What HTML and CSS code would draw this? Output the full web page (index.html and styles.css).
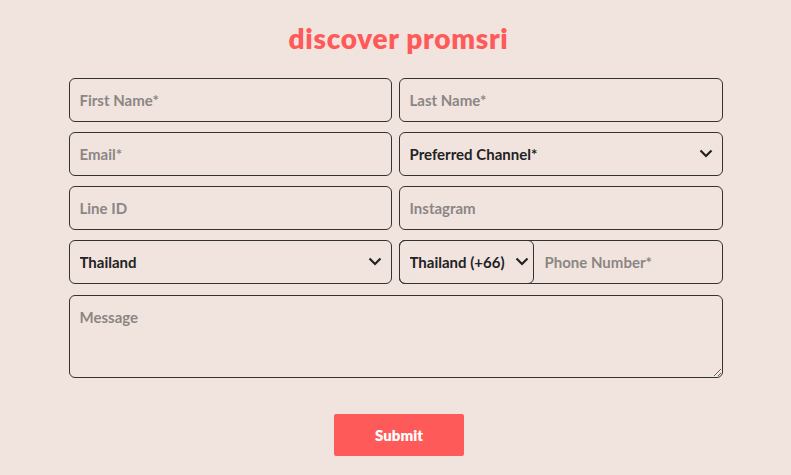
FILE: index.html
```html
<!DOCTYPE html>
<html lang="en">

<head>
    <meta charset="UTF-8">
    <title>discover promsri</title>
    <link rel="stylesheet" href="styles.css">
</head>

<body>
    <div class="container">
        <h2>discover promsri</h2>

        <form class="form">
            <div class="row">
                <input type="text" placeholder="First Name*">
                <input type="text" placeholder="Last Name*">
            </div>
            <div class="row">
                <input type="email" placeholder="Email*">
                <div class="select-wrap">
                    <select>
                        <option>Preferred Channel*</option>
                    </select>
                    <svg class="chevron" viewBox="0 0 14 9"><path d="M1.5 1.5 L7 7 L12.5 1.5" /></svg>
                </div>
            </div>
            <div class="row">
                <input type="text" placeholder="Line ID">
                <input type="text" placeholder="Instagram">
            </div>
            <div class="row">
                <div class="select-wrap">
                    <select>
                        <option>Thailand</option>
                    </select>
                    <svg class="chevron" viewBox="0 0 14 9"><path d="M1.5 1.5 L7 7 L12.5 1.5" /></svg>
                </div>
                <div class="phone">
                    <div class="select-wrap code">
                        <select>
                            <option>Thailand (+66)</option>
                        </select>
                        <svg class="chevron" viewBox="0 0 14 9"><path d="M1.5 1.5 L7 7 L12.5 1.5" /></svg>
                    </div>
                    <input type="tel" class="tel" placeholder="Phone Number*">
                </div>
            </div>
            <textarea placeholder="Message"></textarea>

            <button type="button">Submit</button>
        </form>
    </div>
</body>

</html>
```

FILE: styles.css
```css
body {
    margin: 0;
    font-family: 'Lato', sans-serif;
    background: #f1e4df;
    min-height: 100vh;
}

.container {
    width: 654px;
    margin: 0 auto;
    padding-top: 21px;
}

h2 {
    text-align: center;
    color: #ff5a5a;
    font-size: 28px;
    font-weight: 800;
    letter-spacing: 0.7px;
    margin: 0 0 23px;
    padding-left: 6px;
    line-height: 34px;
}

.form {
    display: flex;
    flex-direction: column;
    gap: 10px;
}

.row {
    display: grid;
    grid-template-columns: 323px 324px;
    gap: 7px;
}

input,
select,
textarea {
    box-sizing: border-box;
    width: 100%;
    height: 44px;
    padding: 0 10px;
    border: 1px solid #333;
    border-radius: 6px;
    background: transparent;
    font-family: 'Lato', sans-serif;
    font-size: 15px;
    font-weight: 700;
    color: #222;
    outline: none;
}

select {
    appearance: none;
    -webkit-appearance: none;
}

::placeholder {
    color: #8b8683;
}

.select-wrap {
    position: relative;
}

.chevron {
    position: absolute;
    right: 10px;
    top: 17px;
    width: 14px;
    height: 9px;
    pointer-events: none;
}

.chevron path {
    fill: none;
    stroke: #222;
    stroke-width: 2.2;
}

.phone {
    display: flex;
    border: 1px solid #333;
    border-radius: 6px;
    height: 44px;
    box-sizing: border-box;
}

.phone .code {
    width: 135px;
    flex: none;
    margin: -1px 0 -1px -1px;
}

.phone .code select {
    height: 44px;
    border-radius: 6px;
}

.phone .code .chevron {
    right: 5px;
}

.tel {
    border: none;
    height: 42px;
    flex: 1;
    padding-left: 11px;
}

textarea {
    height: 83px;
    padding: 12px 10px;
    margin-top: 1px;
    resize: vertical;
}

button {
    align-self: center;
    width: 130px;
    height: 42px;
    margin: 26px 0 0 7px;
    border: none;
    border-radius: 2px;
    background: #ff5a5a;
    color: white;
    font-family: 'Lato', sans-serif;
    font-size: 15px;
    font-weight: 800;
    cursor: pointer;
}
```
